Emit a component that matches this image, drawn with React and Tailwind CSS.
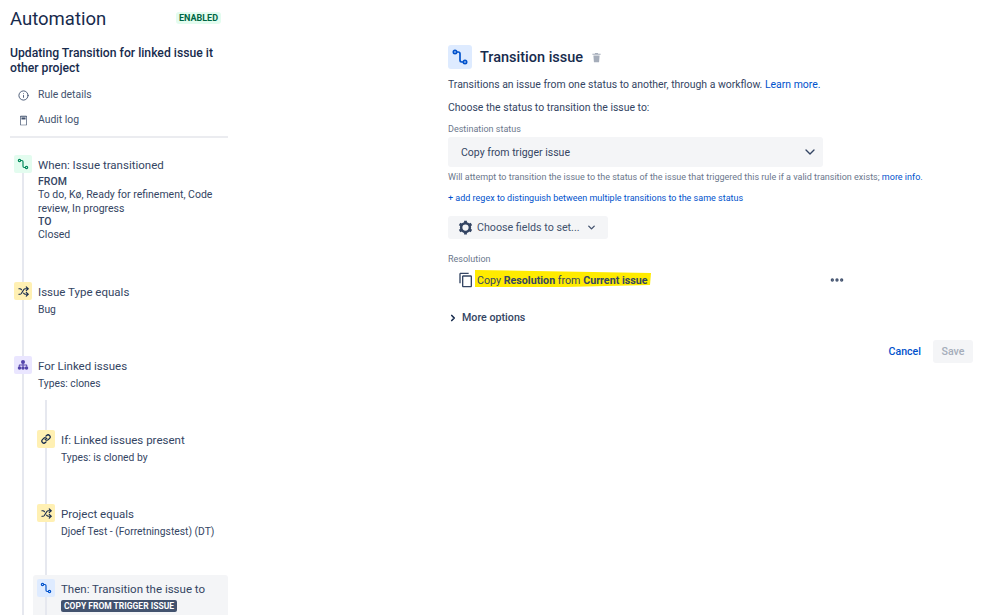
import React from 'react';
import { ChevronDown, ChevronRight, Ellipsis, Info, Link, Shuffle } from 'lucide-react';

const font = "font-['Roboto','Noto_Sans',sans-serif]";

const TransitionIcon = ({ className }) => (
  <svg viewBox="0 0 24 24" fill="none" stroke="currentColor" strokeWidth="2" className={className}>
    <circle cx="6" cy="6" r="2" />
    <path d="M8 6h2a2 2 0 0 1 2 2v8a2 2 0 0 0 2 2h2" />
    <circle cx="18" cy="18" r="2" />
  </svg>
);

const BranchIcon = ({ className }) => (
  <svg viewBox="0 0 24 24" fill="currentColor" className={className}>
    <circle cx="12" cy="6" r="4" />
    <circle cx="5" cy="18" r="3.500" />
    <circle cx="12" cy="18" r="3.500" />
    <circle cx="19" cy="18" r="3.500" />
    <path d="M11 9h2v2h6a1.500 1.500 0 0 1 1.500 1.500V15h-2v-2H13v2h-2v-2H5.500v2h-2v-2.500A1.500 1.500 0 0 1 5 11h6z" />
  </svg>
);

const AuditIcon = ({ className }) => (
  <svg viewBox="0 0 16 16" fill="currentColor" className={className}>
    <path fillRule="evenodd" d="M4 1h8a1 1 0 0 1 1 1v12a1 1 0 0 1-1 1H4a1 1 0 0 1-1-1V2a1 1 0 0 1 1-1zm0 1.500V14h8V2.500z" />
    <path d="M5 3.500h6v3H5z" />
  </svg>
);

const TrashIcon = ({ className }) => (
  <svg viewBox="0 0 16 16" fill="currentColor" className={className}>
    <path d="M6 1.500h4l.5 1H14v1.500H2V2.500h3.500z" />
    <path d="M3.500 5h9l-.7 9a1 1 0 0 1-1 1H5.200a1 1 0 0 1-1-1z" />
  </svg>
);

const CogIcon = ({ className }) => (
  <svg viewBox="0 0 24 24" fill="none" stroke="currentColor" strokeWidth="4" className={className}>
    <circle cx="12" cy="12" r="7" />
    <path d="M12 1v4M12 19v4M2.500 6.500l3.500 2M18 15.500l3.500 2M2.500 17.500l3.500-2M18 8.500l3.500-2" strokeWidth="4.500" />
  </svg>
);

const CopyIcon = ({ className }) => (
  <svg viewBox="0 0 24 24" fill="currentColor" className={className}>
    <path d="M16 1H4c-1.100 0-2 .9-2 2v14h2V3h12V1zm3 4H8c-1.100 0-2 .9-2 2v14c0 1.100.9 2 2 2h11c1.100 0 2-.9 2-2V7c0-1.100-.9-2-2-2zm0 16H8V7h11v14z" />
  </svg>
);

const RuleIcon = ({ color, children }) => (
  <div className={`flex h-[18px] w-[18px] shrink-0 items-center justify-center rounded-[2px] ${color}`}>
    {children}
  </div>
);

const Rule = ({ icon, title, height, children }) => (
  <div className="flex gap-[6px]" style={{ minHeight: height }}>
    <div className="flex w-[18px] shrink-0 flex-col items-center">
      {icon}
      <div className="w-[2px] flex-1 bg-[#e6e8ef]" />
    </div>
    <div className="min-w-0 flex-1">
      <div className="pt-[1px] pb-[1px] text-[11.500px] leading-[18px] text-[#344563]">{title}</div>
      {children}
    </div>
  </div>
);

const Sub = ({ children }) => (
  <div className="text-[10.300px] leading-[16px] whitespace-nowrap text-[#344563]">{children}</div>
);

const Sidebar = () => (
  <aside className="w-[228px] shrink-0 pl-[10px]">
    <div className="flex items-start justify-between pt-[7px] pr-[7px]">
      <h1 className="text-[18.500px] leading-[24px] font-normal text-[#172b4d]">Automation</h1>
      <span className="mt-[5px] rounded-[3px] bg-[#e3fcef] px-[3px] text-[9px] leading-[12px] font-bold text-[#006644]">ENABLED</span>
    </div>
    <h2 className="mt-[15px] text-[12.200px] leading-[15px] font-medium text-[#172b4d]">Updating Transition for linked issue it other project</h2>
    <div className="mt-[11px] flex items-center gap-[9px] pl-[8px] text-[10.400px] leading-[16px] text-[#42526e]">
      <Info size={11} />
      <span>Rule details</span>
    </div>
    <div className="mt-[9px] flex items-center gap-[9px] pl-[8px] text-[10.400px] leading-[16px] text-[#42526e]">
      <AuditIcon className="h-[11px] w-[11px]" />
      <span>Audit log</span>
    </div>
    <div className="mt-[8px] h-[2px] bg-[#ebecf0]" />
    <div className="mt-[17px] pl-[4px]">
      <Rule
        height={127}
        title="When: Issue transitioned"
        icon={<RuleIcon color="bg-[#e3fcef] text-[#00875a]"><TransitionIcon className="h-[14px] w-[14px]" /></RuleIcon>}
      >
        <div className="text-[10.500px] leading-[13.300px] text-[#344563]">
          <div className="font-medium">FROM</div>
          <div>To do, Kø, Ready for refinement, Code review, In progress</div>
          <div className="font-medium">TO</div>
          <div>Closed</div>
        </div>
      </Rule>
      <Rule
        height={74}
        title="Issue Type equals"
        icon={<RuleIcon color="bg-[#fff0b3] text-[#172b4d]"><Shuffle size={11} strokeWidth={2.500} /></RuleIcon>}
      >
        <Sub>Bug</Sub>
      </Rule>
      <Rule
        title="For Linked issues"
        icon={<RuleIcon color="bg-[#eae6ff] text-[#5243aa]"><BranchIcon className="h-[12px] w-[12px]" /></RuleIcon>}
      >
        <Sub>Types: clones</Sub>
        <div className="-ml-[5px]">
          <div className="h-[38px] pt-[8px] pl-[12px]">
            <div className="h-full w-[2px] bg-[#e6e8ef]" />
          </div>
          <div className="pl-[4px]">
            <Rule
              height={74}
              title="If: Linked issues present"
              icon={<RuleIcon color="bg-[#fff0b3] text-[#172b4d]"><Link size={10} strokeWidth={3} /></RuleIcon>}
            >
              <Sub>Types: is cloned by</Sub>
            </Rule>
            <Rule
              height={71}
              title="Project equals"
              icon={<RuleIcon color="bg-[#fff0b3] text-[#172b4d]"><Shuffle size={11} strokeWidth={2.500} /></RuleIcon>}
            >
              <Sub>Djoef Test - (Forretningstest) (DT)</Sub>
            </Rule>
          </div>
          <div className="rounded-t-[3px] bg-[#f4f5f7] pt-[4px] pl-[4px]">
            <Rule
              height={36}
              title="Then: Transition the issue to"
              icon={<RuleIcon color="bg-[#deebff] text-[#0052cc]"><TransitionIcon className="h-[14px] w-[14px]" /></RuleIcon>}
            >
              <div className="mt-[1px] w-fit rounded-[2px] bg-[#42526e] px-[3px] text-[8.500px] leading-[12px] font-bold whitespace-nowrap text-white">COPY FROM TRIGGER ISSUE</div>
            </Rule>
          </div>
        </div>
      </Rule>
    </div>
  </aside>
);

const Main = () => (
  <main className="ml-[220px] w-[525px] shrink-0 pt-[44px]">
    <div className="flex items-center">
      <div className="flex h-[24px] w-[24px] items-center justify-center rounded-[3px] bg-[#deebff] text-[#0052cc]">
        <TransitionIcon className="h-[20px] w-[20px]" />
      </div>
      <h2 className="ml-[8px] pt-[2px] text-[14.500px] leading-[24px] font-medium text-[#172b4d]">Transition issue</h2>
      <TrashIcon className="ml-[8px] h-[11px] w-[11px] text-[#a5adba]" />
    </div>
    <p className="mt-[7px] text-[10.450px] leading-[16px] whitespace-nowrap text-[#344563]">
      Transitions an issue from one status to another, through a workflow. <span className="text-[#0052cc]">Learn more.</span>
    </p>
    <p className="mt-[7px] text-[10.450px] leading-[16px] text-[#344563]">Choose the status to transition the issue to:</p>
    <div className="mt-[7px] text-[9px] leading-[12px] text-[#6b778c]">Destination status</div>
    <div className="mt-[2px] flex h-[30px] w-[375px] items-center justify-between rounded-[3px] bg-[#f4f5f7] pr-[5px] pl-[13px] text-[10.500px] text-[#344563]">
      <span className="pt-[2px]">Copy from trigger issue</span>
      <ChevronDown size={16} />
    </div>
    <p className="mt-[3px] text-[9px] leading-[14px] whitespace-nowrap text-[#6b778c]">
      Will attempt to transition the issue to the status of the issue that triggered this rule if a valid transition exists; <span className="text-[#0052cc]">more info.</span>
    </p>
    <p className="mt-[7px] text-[9px] leading-[14px] text-[#0052cc]">+ add regex to distinguish between multiple transitions to the same status</p>
    <div className="mt-[11px] flex h-[23px] w-[160px] items-center rounded-[3px] bg-[#f4f5f7] pl-[10px] text-[10.700px] text-[#42526e]">
      <CogIcon className="h-[15px] w-[15px] text-[#344563]" />
      <span className="ml-[4px] pt-[2px]">Choose fields to set...</span>
      <ChevronDown size={11} strokeWidth={3} className="ml-[6px]" />
    </div>
    <div className="mt-[14px] text-[9px] leading-[12px] text-[#6b778c]">Resolution</div>
    <div className="mt-[6px] flex h-[18px] w-[397px] items-center pl-[10px] text-[10.700px] text-[#344563]">
      <CopyIcon className="h-[16px] w-[16px] shrink-0 text-[#344563]" />
      <span className="relative ml-[3px] pt-[2px]">
        <svg viewBox="0 0 176 18" preserveAspectRatio="none" className="absolute -top-[1px] -left-[2px] h-[18px] w-[176px]">
          <path d="M0 0 L60 1 L176 3 L175 15 L90 17 L0 17 Z" fill="#ffeb00" />
        </svg>
        <span className="relative">Copy <b className="font-bold">Resolution</b> from <b className="font-bold">Current issue</b></span>
      </span>
      <Ellipsis size={16} strokeWidth={3} className="ml-auto text-[#42526e]" />
    </div>
    <div className="mt-[21px] flex items-center text-[10.700px] leading-[16px] font-medium text-[#344563]">
      <ChevronRight size={10} strokeWidth={4} className="text-[#172b4d]" />
      <span className="ml-[4px]">More options</span>
    </div>
    <div className="mt-[14px] flex items-center justify-end text-[10.600px] font-medium">
      <span className="text-[#0052cc]">Cancel</span>
      <span className="ml-[12px] flex h-[23px] w-[40px] items-center justify-center rounded-[3px] bg-[#f4f5f7] text-[#a5adba]">Save</span>
    </div>
  </main>
);

export default function App() {
  return (
    <div className={`flex h-[615px] w-[999px] overflow-hidden bg-white ${font}`}>
      <Sidebar />
      <Main />
    </div>
  );
}
